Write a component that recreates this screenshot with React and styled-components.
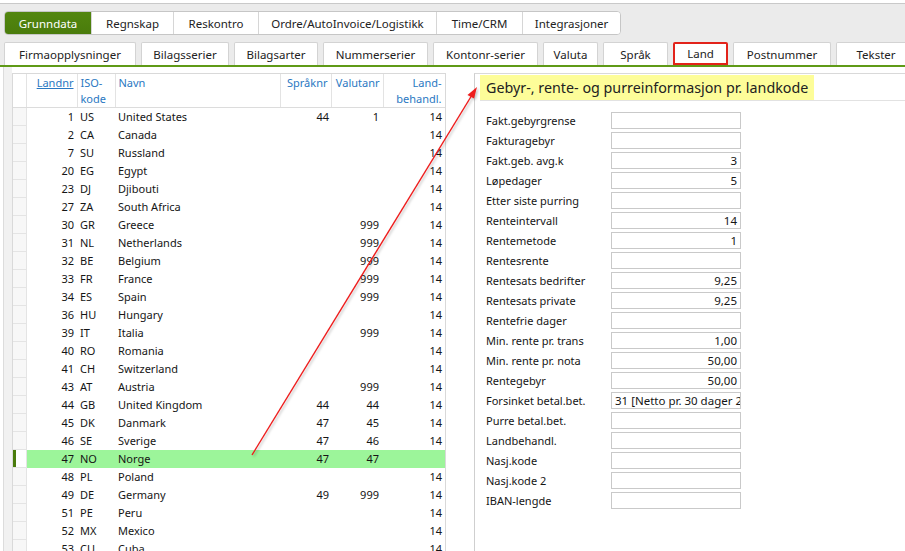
import styled, { createGlobalStyle } from "styled-components";

const green = "#4a7c0c";
const lineGreen = "#5f9a17";
const border = "#d3d3d3";
const blue = "#2a78c2";
const text = "#151515";

const GlobalStyle = createGlobalStyle`
  html, body {
    margin: 0;
    padding: 0;
    background: #ebebeb;
    font-family: "Noto Sans", "Liberation Sans", sans-serif;
    color: ${text};
    overflow: hidden;
  }
`;

const Page = styled.div`
  position: relative;
  width: 905px;
  height: 551px;
  display: flex;
  flex-direction: column;
  overflow: hidden;
`;

const TopStrip = styled.div`
  height: 3px;
  background: #fff;
  border-bottom: 1px solid #c9c9c9;
`;

const MainTabRow = styled.div`
  display: flex;
  padding: 7px 0 0 4px;
`;

const MainTabGroup = styled.div`
  display: flex;
  border: 1px solid #c6c6c6;
  border-radius: 4px;
  background: #fff;
  overflow: hidden;
  height: 22px;
`;

const MainTab = styled.div`
  display: flex;
  align-items: center;
  justify-content: center;
  width: ${(p) => p.w}px;
  font-size: 11.5px;
  border-left: ${(p) => (p.first ? "none" : "1px solid #d6d6d6")};
  background: ${(p) => (p.active ? `linear-gradient(#52860f, ${green})` : "#fff")};
  color: ${(p) => (p.active ? "#fff" : "#222")};
`;

const SubTabRow = styled.div`
  display: flex;
  gap: 5px;
  padding: 7px 0 0 4px;
  border-bottom: 2px solid ${lineGreen};
`;

const SubTab = styled.div`
  display: flex;
  align-items: center;
  justify-content: center;
  flex: none;
  box-sizing: border-box;
  width: ${(p) => p.w}px;
  height: 23px;
  font-size: 11.5px;
  background: #fff;
  border: ${(p) => (p.marked ? "2px solid #e2231a" : `1px solid ${border}`)};
  border-bottom: ${(p) => (p.marked ? "2px solid #e2231a" : "none")};
  border-radius: 2px 2px 0 0;
  color: #222;
`;

const Content = styled.div`
  flex: 1;
  display: flex;
  background: #fff;
  min-height: 0;
`;

const Gutter = styled.div`
  width: 8px;
  margin-left: 3px;
  border-left: 1px solid #dcdcdc;
  background: #f1f1f1;
`;

const TablePanel = styled.div`
  margin-top: 6px;
  width: 432px;
  border: 1px solid #d9d9d9;
  border-bottom: none;
  overflow: hidden;
`;

const Grid = styled.table`
  border-collapse: collapse;
  table-layout: fixed;
  width: 432px;
  font-size: 11px;
`;

const HeadCell = styled.th`
  box-sizing: border-box;
  height: 33px;
  padding: 1px 3px 0 3px;
  vertical-align: top;
  text-align: ${(p) => p.align || "left"};
  font-weight: normal;
  line-height: 16px;
  white-space: nowrap;
  color: ${blue};
  text-decoration: ${(p) => (p.sorted ? "underline" : "none")};
  border-right: 1px solid #e3e3e3;
  border-bottom: 1px solid #dcdcdc;
  background: #fff;
`;

const SelCell = styled.td`
  padding: 0;
  height: 17px;
  border-bottom: 1px solid #e4e4e4;
  border-right: 1px solid #e4e4e4;
  background: ${(p) => (p.current ? "#fff" : "#f7f7f7")};
  box-shadow: ${(p) => (p.current ? `inset 3px 0 0 ${green}` : "none")};
`;

const Cell = styled.td`
  padding: 0 ${(p) => p.pr ?? 3}px 0 3px;
  height: 17px;
  line-height: 17px;
  white-space: nowrap;
  overflow: hidden;
  text-align: ${(p) => p.align || "left"};
  background: ${(p) => (p.current ? "#9cf59a" : "#fff")};
  border-bottom: 1px solid ${(p) => (p.current ? "#9cf59a" : "#fff")};
`;

const Between = styled.div`
  width: 28px;
`;

const FormPanel = styled.div`
  flex: 1;
  margin-top: 6px;
  border-left: 1px solid #cfcfcf;
  border-top: 1px solid #d9d9d9;
  display: flex;
  flex-direction: column;
`;

const TitleBar = styled.div`
  margin: 1px 0 0 5px;
  border-bottom: 1px solid #e2e2e2;
  display: flex;
`;

const Title = styled.div`
  background: #fdfd99;
  height: 25px;
  line-height: 25px;
  padding: 0 6px;
  font-size: 14.3px;
  color: #222;
`;

const Form = styled.div`
  display: flex;
  flex-direction: column;
  padding: 9px 0 0 11px;
`;

const FormRow = styled.div`
  display: grid;
  grid-template-columns: 125px 130px;
  align-items: center;
  height: 20px;
  font-size: 11px;
  white-space: nowrap;
`;

const Field = styled.div`
  box-sizing: border-box;
  height: 17px;
  line-height: 15px;
  border: 1px solid #c9c9c9;
  padding: 0 3px;
  font-size: 11.5px;
  text-align: ${(p) => (p.left ? "left" : "right")};
  white-space: nowrap;
  overflow: hidden;
  color: ${text};
`;

const Overlay = styled.svg`
  position: absolute;
  left: 0;
  top: 0;
  pointer-events: none;
`;

const mainTabs = [
  ["Grunndata", 86],
  ["Regnskap", 81],
  ["Reskontro", 84],
  ["Ordre/AutoInvoice/Logistikk", 177],
  ["Time/CRM", 85],
  ["Integrasjoner", 97],
];

const subTabs = [
  ["Firmaopplysninger", 132],
  ["Bilagsserier", 88],
  ["Bilagsarter", 84],
  ["Nummerserier", 105],
  ["Kontonr-serier", 105],
  ["Valuta", 55],
  ["Språk", 65],
  ["Land", 55],
  ["Postnummer", 98],
  ["Tekster", 80],
];

const columns = [13, 51, 38, 165, 51, 52, 62];

const countries = [
  [1, "US", "United States", 44, 1, 14],
  [2, "CA", "Canada", "", "", 14],
  [7, "SU", "Russland", "", "", 14],
  [20, "EG", "Egypt", "", "", 14],
  [23, "DJ", "Djibouti", "", "", 14],
  [27, "ZA", "South Africa", "", "", 14],
  [30, "GR", "Greece", "", 999, 14],
  [31, "NL", "Netherlands", "", 999, 14],
  [32, "BE", "Belgium", "", 999, 14],
  [33, "FR", "France", "", 999, 14],
  [34, "ES", "Spain", "", 999, 14],
  [36, "HU", "Hungary", "", "", 14],
  [39, "IT", "Italia", "", 999, 14],
  [40, "RO", "Romania", "", "", 14],
  [41, "CH", "Switzerland", "", "", 14],
  [43, "AT", "Austria", "", 999, 14],
  [44, "GB", "United Kingdom", 44, 44, 14],
  [45, "DK", "Danmark", 47, 45, 14],
  [46, "SE", "Sverige", 47, 46, 14],
  [47, "NO", "Norge", 47, 47, ""],
  [48, "PL", "Poland", "", "", 14],
  [49, "DE", "Germany", 49, 999, 14],
  [51, "PE", "Peru", "", "", 14],
  [52, "MX", "Mexico", "", "", 14],
  [53, "CU", "Cuba", "", "", 14],
];

const fields = [
  ["Fakt.gebyrgrense", ""],
  ["Fakturagebyr", ""],
  ["Fakt.geb. avg.k", "3"],
  ["Løpedager", "5"],
  ["Etter siste purring", ""],
  ["Renteintervall", "14"],
  ["Rentemetode", "1"],
  ["Rentesrente", ""],
  ["Rentesats bedrifter", "9,25"],
  ["Rentesats private", "9,25"],
  ["Rentefrie dager", ""],
  ["Min. rente pr. trans", "1,00"],
  ["Min. rente pr. nota", "50,00"],
  ["Rentegebyr", "50,00"],
  ["Forsinket betal.bet.", "31 [Netto pr. 30 dager 2]", true],
  ["Purre betal.bet.", ""],
  ["Landbehandl.", ""],
  ["Nasj.kode", ""],
  ["Nasj.kode 2", ""],
  ["IBAN-lengde", ""],
];

export default function App() {
  return (
    <Page>
      <GlobalStyle />
      <TopStrip />
      <MainTabRow>
        <MainTabGroup>
          {mainTabs.map(([label, w], i) => (
            <MainTab key={label} w={w} first={i === 0} active={i === 0}>
              {label}
            </MainTab>
          ))}
        </MainTabGroup>
      </MainTabRow>
      <SubTabRow>
        {subTabs.map(([label, w]) => (
          <SubTab key={label} w={w} marked={label === "Land"}>
            {label}
          </SubTab>
        ))}
      </SubTabRow>

      <Content>
        <Gutter />
        <TablePanel>
          <Grid>
            <colgroup>
              {columns.map((w, i) => (
                <col key={i} style={{ width: w }} />
              ))}
            </colgroup>
            <thead>
              <tr>
                <HeadCell />
                <HeadCell align="right" sorted>
                  Landnr
                </HeadCell>
                <HeadCell>
                  ISO-
                  <br />
                  kode
                </HeadCell>
                <HeadCell>Navn</HeadCell>
                <HeadCell align="right">Språknr</HeadCell>
                <HeadCell align="right">Valutanr</HeadCell>
                <HeadCell align="right">
                  Land-
                  <br />
                  behandl.
                </HeadCell>
              </tr>
            </thead>
            <tbody>
              {countries.map(([nr, iso, name, sprak, valuta, land]) => {
                const current = iso === "NO";
                return (
                  <tr key={nr}>
                    <SelCell current={current} />
                    <Cell align="right" current={current}>
                      {nr}
                    </Cell>
                    <Cell current={current}>{iso}</Cell>
                    <Cell current={current}>{name}</Cell>
                    <Cell align="right" pr={2} current={current}>
                      {sprak}
                    </Cell>
                    <Cell align="right" pr={4} current={current}>
                      {valuta}
                    </Cell>
                    <Cell align="right" current={current}>
                      {land}
                    </Cell>
                  </tr>
                );
              })}
            </tbody>
          </Grid>
        </TablePanel>
        <Between />

        <FormPanel>
          <TitleBar>
            <Title>Gebyr-, rente- og purreinformasjon pr. landkode</Title>
          </TitleBar>
          <Form>
            {fields.map(([label, value, left]) => (
              <FormRow key={label}>
                <span>{label}</span>
                <Field left={left}>{value}</Field>
              </FormRow>
            ))}
          </Form>
        </FormPanel>
      </Content>

      {/* annotation arrow from the Norge row to the panel title */}
      <Overlay width="905" height="551" viewBox="0 0 905 551">
        <defs>
          <filter id="shadow" x="-10%" y="-10%" width="120%" height="120%">
            <feDropShadow dx="1.5" dy="1.5" stdDeviation="1" floodColor="#000" floodOpacity="0.25" />
          </filter>
        </defs>
        <g filter="url(#shadow)">
          <line x1="252" y1="455" x2="472" y2="95" stroke="#ee1c1c" strokeWidth="1.4" />
          <polygon points="477,87 467.5,95 474,98.5" fill="#ee1c1c" />
        </g>
      </Overlay>
    </Page>
  );
}
